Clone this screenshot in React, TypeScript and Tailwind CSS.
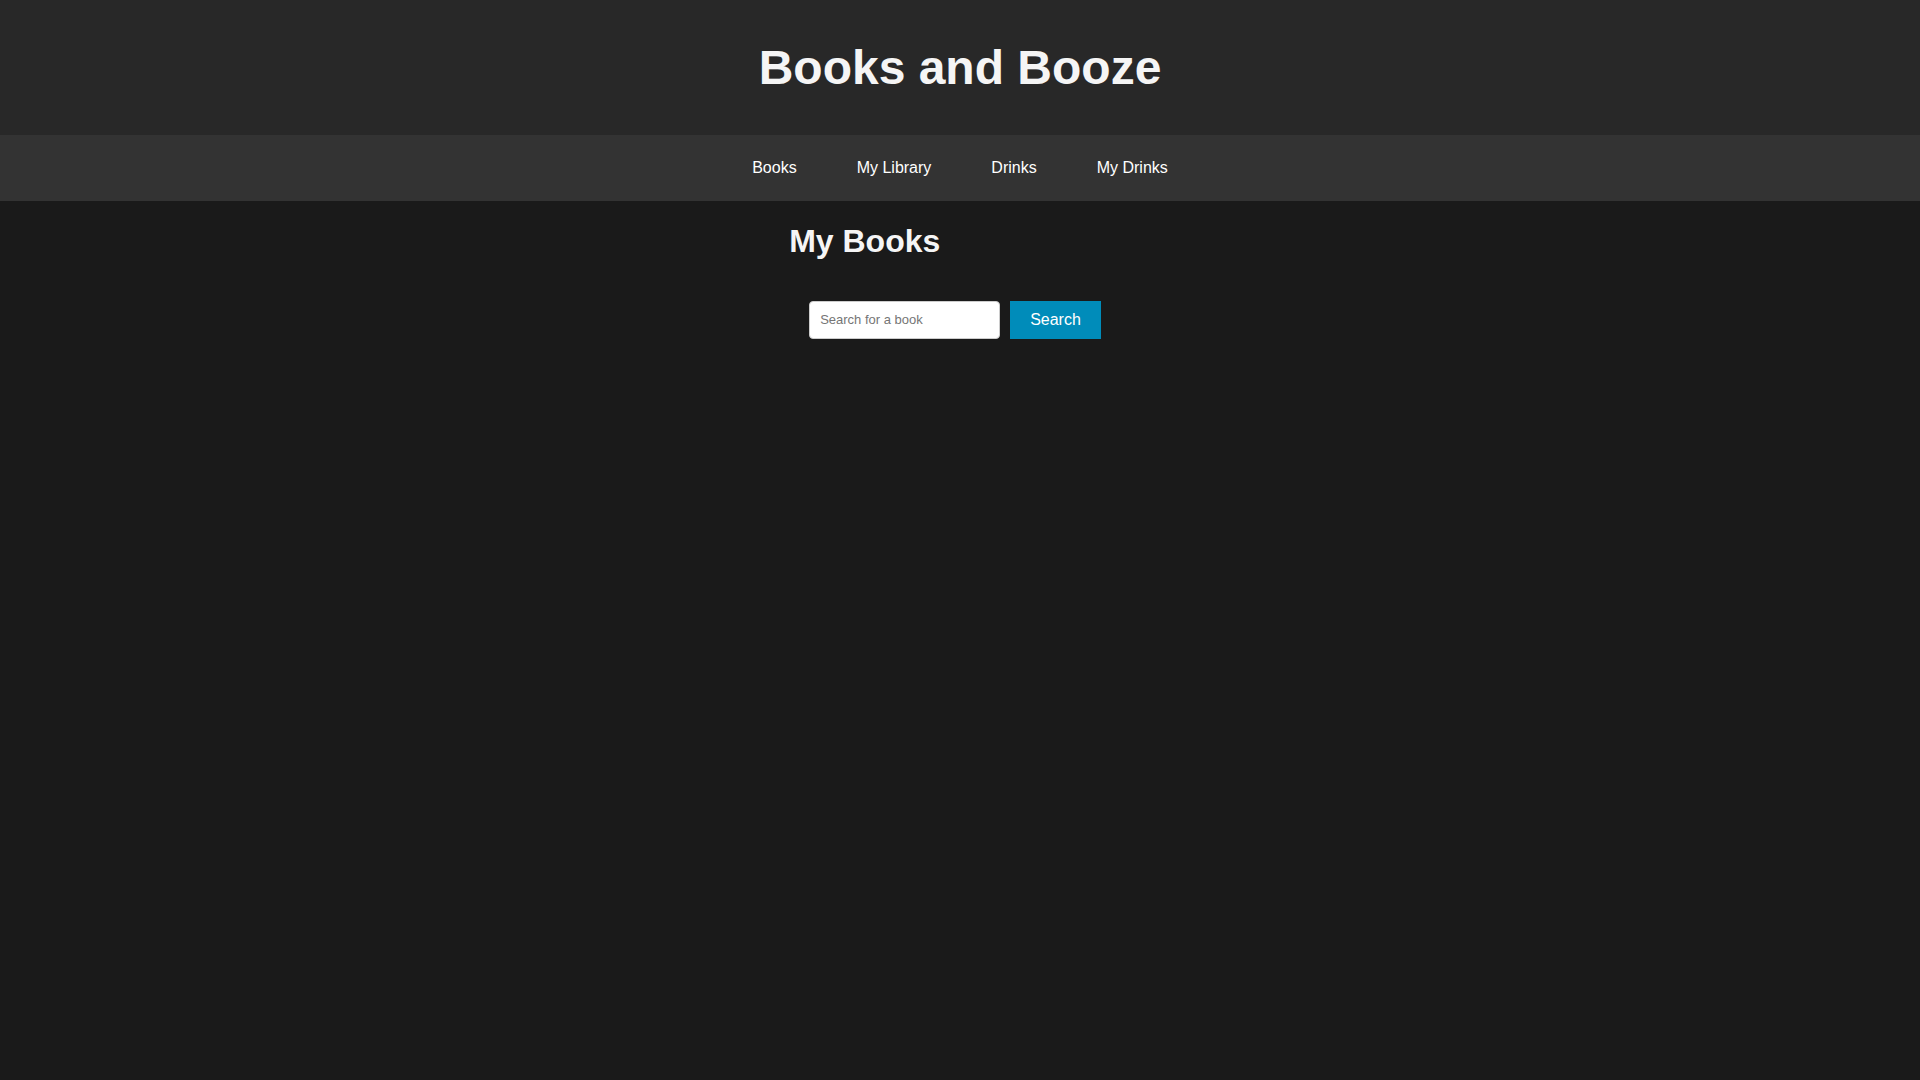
const links = ["Books", "My Library", "Drinks", "My Drinks"];

export default function App() {
  return (
    <div className="min-h-screen bg-[#1a1a1a] font-['Liberation_Sans',Arial,sans-serif] text-base text-white">
      <header className="bg-[#282828] px-5 py-10 text-center">
        <h1 className="text-5xl leading-[55px] font-bold text-[#f5f5f5]">Books and Booze</h1>
      </header>
      <nav className="bg-[#333333] p-5">
        <ul className="flex flex-wrap justify-center gap-x-[60px]">
          {links.map((label) => (
            <li key={label}>
              <a href="#" className="leading-[26px]">{label}</a>
            </li>
          ))}
        </ul>
      </nav>
      <main className="mx-auto w-fit pt-5">
        <h2 className="text-[32px] leading-10 font-bold text-[#f5f5f5]">My Books</h2>
        <form className="flex gap-2.5 px-5 pt-10" onSubmit={(e) => e.preventDefault()}>
          <input
            type="text"
            aria-label="Search for a book"
            placeholder="Search for a book"
            className="w-[191px] rounded border border-[#cccccc] bg-white px-2.5 text-[13px] text-black placeholder:text-[#757575]"
          />
          <button type="submit" className="mr-2.5 bg-[#008cba] px-5 py-2.5 leading-[18px]">
            Search
          </button>
        </form>
      </main>
    </div>
  );
}
